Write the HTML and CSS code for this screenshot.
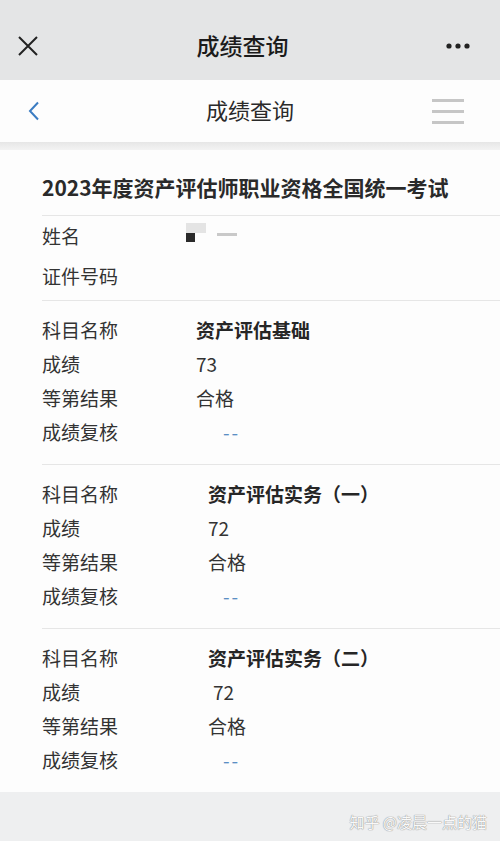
FILE: index.html
```html
<!DOCTYPE html>
<html lang="zh-CN">
<head>
  <meta charset="UTF-8" />
  <meta name="viewport" content="width=device-width, initial-scale=1.0"/>
  <title>成绩查询</title>
  <link rel="stylesheet" href="styles.css">
</head>
<body>

  <!-- WeChat style top bar -->
  <div class="topbar">
    <svg class="close-icon" width="22" height="22" viewBox="0 0 22 22">
      <path d="M2 2 L20 20 M20 2 L2 20" stroke="#222" stroke-width="2" fill="none"/>
    </svg>
    <div class="topbar-title">成绩查询</div>
    <svg class="more-icon" width="26" height="6" viewBox="0 0 26 6">
      <circle cx="3" cy="3" r="2.6" fill="#222"/>
      <circle cx="12" cy="3" r="2.6" fill="#222"/>
      <circle cx="21" cy="3" r="2.6" fill="#222"/>
    </svg>
  </div>

  <!-- Page nav bar -->
  <div class="navbar">
    <svg class="back-icon" width="12" height="20" viewBox="0 0 12 20">
      <path d="M10 1.5 L2 10 L10 18.5" stroke="#3b7cc2" stroke-width="2" fill="none"/>
    </svg>
    <div class="navbar-title">成绩查询</div>
    <div class="menu-icon">
      <span></span><span></span><span></span>
    </div>
  </div>

  <div class="divider-gap"></div>

  <div class="card">
    <h1 class="exam-title">2023年度资产评估师职业资格全国统一考试</h1>

    <div class="section info">
      <div class="row row-tall">
        <span class="label">姓名</span>
        <span class="redact">
          <i class="r1"></i><i class="r2"></i><i class="r3"></i>
        </span>
      </div>
      <div class="row row-tall">
        <span class="label">证件号码</span>
      </div>
    </div>

    <div class="section subject first">
      <div class="row"><span class="label">科目名称</span><span class="value bold">资产评估基础</span></div>
      <div class="row"><span class="label">成绩</span><span class="value">73</span></div>
      <div class="row"><span class="label">等第结果</span><span class="value">合格</span></div>
      <div class="row"><span class="label">成绩复核</span><span class="value dash">--</span></div>
    </div>

    <div class="section subject">
      <div class="row"><span class="label">科目名称</span><span class="value bold">资产评估实务（一）</span></div>
      <div class="row"><span class="label">成绩</span><span class="value">72</span></div>
      <div class="row"><span class="label">等第结果</span><span class="value">合格</span></div>
      <div class="row"><span class="label">成绩复核</span><span class="value dash">--</span></div>
    </div>

    <div class="section subject last">
      <div class="row"><span class="label">科目名称</span><span class="value bold">资产评估实务（二）</span></div>
      <div class="row"><span class="label">成绩</span><span class="value shift">72</span></div>
      <div class="row"><span class="label">等第结果</span><span class="value">合格</span></div>
      <div class="row"><span class="label">成绩复核</span><span class="value dash">--</span></div>
    </div>
  </div>

  <div class="footer">
    <span class="watermark">知乎 @凌晨一点的猫</span>
  </div>

</body>
</html>
```

FILE: styles.css
```css
body {
  margin: 0;
  font-family: "Noto Sans CJK SC", "Noto Sans", sans-serif;
  background: #eeeff0;
  color: #333;
}

.topbar {
  height: 68px;
  padding-top: 12px;
  background: #e4e5e6;
  display: flex;
  align-items: center;
  justify-content: space-between;
  padding-left: 16px;
  padding-right: 28px;
}

.topbar-title {
  font-size: 23px;
  color: #1b1b1b;
  font-weight: 500;
  margin-bottom: 2px;
}

.close-icon {
  margin-left: 1px;
}

.navbar {
  height: 62px;
  background: #fdfdfd;
  display: flex;
  align-items: center;
  justify-content: space-between;
  padding-left: 28px;
  padding-right: 36px;
}

.navbar-title {
  font-size: 22px;
  color: #2a2a2a;
  margin-left: 28px;
  margin-bottom: 4px;
}

.menu-icon {
  width: 32px;
  display: flex;
  flex-direction: column;
  gap: 8px;
}

.menu-icon span {
  display: block;
  height: 3px;
  background: #c6c6c6;
}

.divider-gap {
  height: 8px;
  background: linear-gradient(to bottom, #e6e6e6, #f3f3f3);
}

.card {
  background: #fdfdfd;
}

.exam-title {
  margin: 0 0 0 42px;
  padding: 22px 0 13px;
  font-size: 21px;
  line-height: 30px;
  font-weight: 700;
  color: #2a2a2a;
  border-bottom: 1px solid #e6e6e6;
}

.section {
  margin-left: 42px;
  padding: 13px 0 14px;
  border-bottom: 1px solid #e6e6e6;
}

.section.info {
  padding: 1px 0 3px;
}

.section.last {
  border-bottom: none;
}

.row {
  box-sizing: border-box;
  display: flex;
  align-items: center;
  height: 34px;
  padding-bottom: 4px;
  font-size: 19px;
}

.row-tall {
  height: 40px;
}

.label {
  width: 166px;
  flex-shrink: 0;
  color: #333;
}

.first .label {
  width: 154px;
}

.value {
  color: #333;
}

.value.bold {
  font-weight: 700;
  color: #262626;
}

.value.shift {
  padding-left: 5px;
}

.value.dash {
  color: #5b8fc4;
  padding-left: 15px;
  font-size: 19px;
  letter-spacing: 2px;
}

.first .value.dash {
  padding-left: 27px;
}

.redact {
  position: relative;
  width: 60px;
  height: 30px;
  margin-left: -22px;
}

.redact i {
  position: absolute;
  display: block;
}

.redact .r1 {
  left: 0;
  top: 3px;
  width: 20px;
  height: 10px;
  background: #e4e4e4;
}

.redact .r2 {
  left: 0;
  top: 13px;
  width: 9px;
  height: 9px;
  background: #2a2a2a;
}

.redact .r3 {
  left: 31px;
  top: 13px;
  width: 20px;
  height: 3px;
  background: #c9c9c9;
}

.footer {
  height: 50px;
  background: #eeeff0;
  display: flex;
  align-items: center;
  justify-content: flex-end;
  padding-right: 13px;
}

.watermark {
  font-size: 15px;
  color: #f9f9f9;
  text-shadow: 0 0 1px #8f8f8f, 0 0 1px #8f8f8f;
  margin-top: 8px;
}
```
